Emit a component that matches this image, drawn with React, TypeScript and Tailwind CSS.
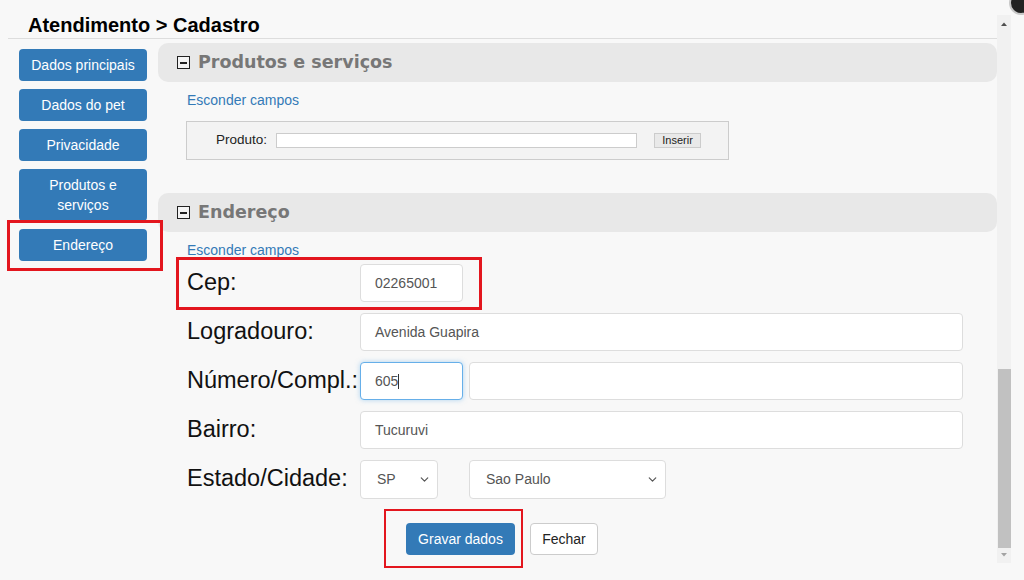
import { ChevronDown } from "lucide-react";

const menu = [
  { label: "Dados principais" },
  { label: "Dados do pet" },
  { label: "Privacidade" },
  { label: "Produtos e serviços", twoLines: true },
  { label: "Endereço", marked: true },
];

function SectionHeader({ title }: { title: string }) {
  return (
    <div className="h-[39px] rounded-[10px] bg-[#e8e8e8] flex items-center pl-[19px] gap-[8px]">
      <span className="w-[13px] h-[13px] border-[1.5px] border-[#222] flex items-center justify-center bg-[#f4f4f4]">
        <span className="w-[7px] h-[2px] bg-[#222]" />
      </span>
      <span className="font-['DejaVu_Sans',Verdana,sans-serif] font-bold text-[17.5px] text-[#777] leading-none">
        {title}
      </span>
    </div>
  );
}

function Field({ value, className }: { value?: string; className: string }) {
  return (
    <div
      className={`h-[38px] bg-white border border-[#ddd] rounded-[4px] flex items-center px-[14px] text-[14px] text-[#555] ${className}`}
    >
      {value}
    </div>
  );
}

function Select({ value, className }: { value: string; className: string }) {
  return (
    <div
      className={`h-[39px] bg-white border border-[#ddd] rounded-[4px] flex items-center justify-between pl-[16px] pr-[6px] text-[14px] text-[#555] ${className}`}
    >
      <span>{value}</span>
      <ChevronDown size={13} strokeWidth={2.2} color="#555" />
    </div>
  );
}

function Row({ label, children }: { label: string; children: React.ReactNode }) {
  return (
    <div className="flex items-center h-[38px]">
      <span className="w-[173px] text-[23.5px] text-[#111] leading-none">{label}</span>
      {children}
    </div>
  );
}

export default function App() {
  return (
    <div className="w-[1024px] h-[580px] bg-[#f8f8f8] flex overflow-hidden relative font-['Liberation_Sans',Arial,sans-serif]">
      <div className="w-[997px] pl-[8px] shrink-0">
        <div className="pl-[20px] pt-[14px] pb-[2px] border-b border-[#ddd]">
          <h1 className="text-[20px] font-bold text-black leading-[22px]">Atendimento &gt; Cadastro</h1>
        </div>

        <div className="flex">
          <nav className="ml-[11px] mt-[10px] w-[128px] flex flex-col gap-[8px] shrink-0">
            {menu.map((m) => (
              <div key={m.label} className="relative">
                <button
                  className={`w-full rounded-[4px] bg-[#337ab7] text-white text-[14px] flex items-center justify-center text-center ${
                    m.twoLines ? "h-[52px] leading-[20px] px-[20px]" : "h-[32px]"
                  }`}
                >
                  {m.label}
                </button>
                {m.marked && (
                  <div className="absolute -left-[12px] -top-[9px] w-[156px] h-[51px] border-[3px] border-[#e3161e]" />
                )}
              </div>
            ))}
          </nav>

          <main className="ml-[11px] mt-[4px] flex-1">
            <SectionHeader title="Produtos e serviços" />
            <a className="block pl-[29px] mt-[10px] text-[14px] text-[#337ab7] leading-[16px]">Esconder campos</a>
            <div className="ml-[28px] mt-[13px] w-[543px] h-[39px] border border-[#ccc] bg-[#f3f3f3] flex items-center pl-[29px]">
              <span className="text-[13.5px] text-[#222]">Produto:</span>
              <span className="ml-[9px] w-[361px] h-[15px] bg-white border border-[#ccc]" />
              <button className="ml-[17px] w-[47px] h-[15px] bg-[#e9e9e9] border border-[#ccc] text-[11px] leading-none text-[#222]">
                Inserir
              </button>
            </div>

            <div className="mt-[33px]">
              <SectionHeader title="Endereço" />
            </div>
            <a className="block pl-[29px] mt-[10px] text-[14px] text-[#337ab7] leading-[16px]">Esconder campos</a>

            <div className="pl-[29px] mt-[6px] flex flex-col gap-[11px]">
              <div className="relative">
                <Row label="Cep:">
                  <Field value="02265001" className="w-[103px]" />
                </Row>
                <div className="absolute -left-[11px] -top-[7px] w-[306px] h-[53px] border-[3px] border-[#e3161e]" />
              </div>
              <Row label="Logradouro:">
                <Field value="Avenida Guapira" className="w-[603px]" />
              </Row>
              <Row label="Número/Compl.:">
                <div className="w-[103px] h-[38px] bg-white border border-[#66afe9] rounded-[4px] flex items-center px-[14px] text-[14px] text-[#555] shadow-[0_0_5px_rgba(102,175,233,0.5)]">
                  605<span className="w-px h-[15px] bg-[#333]" />
                </div>
                <Field className="ml-[6px] w-[494px]" />
              </Row>
              <Row label="Bairro:">
                <Field value="Tucuruvi" className="w-[603px]" />
              </Row>
              <Row label="Estado/Cidade:">
                <Select value="SP" className="w-[78px]" />
                <Select value="Sao Paulo" className="ml-[31px] w-[197px]" />
              </Row>
            </div>

            <div className="mt-[25px] ml-[248px] flex gap-[15px]">
              <div className="relative">
                <button className="w-[109px] h-[32px] rounded-[4px] bg-[#337ab7] text-white text-[14px]">Gravar dados</button>
                <div className="absolute -left-[22px] -top-[14px] w-[139px] h-[59px] border-2 border-[#e3161e]" />
              </div>
              <button className="w-[68px] h-[32px] rounded-[4px] bg-white border border-[#ccc] text-[#222] text-[14px]">
                Fechar
              </button>
            </div>
          </main>
        </div>
      </div>

      <div className="mt-[15px] w-[14px] h-[548px] bg-[#f1f1f1] flex flex-col items-center">
        <svg width="8" height="16" viewBox="0 0 8 16" className="shrink-0">
          <path d="M1 11 L4 7.5 L7 11 Z" fill="#505050" />
        </svg>
        <div className="mt-[338px] w-[13px] h-[179px] bg-[#c1c1c1]" />
        <svg width="8" height="14" viewBox="0 0 8 14" className="shrink-0">
          <path d="M1 5 L4 8.5 L7 5 Z" fill="#a3a3a3" />
        </svg>
      </div>

      <div className="absolute -right-[9px] -top-[9px] w-[24px] h-[24px] rounded-full bg-[#222] border-2 border-[#c8c8c8]" />
    </div>
  );
}
